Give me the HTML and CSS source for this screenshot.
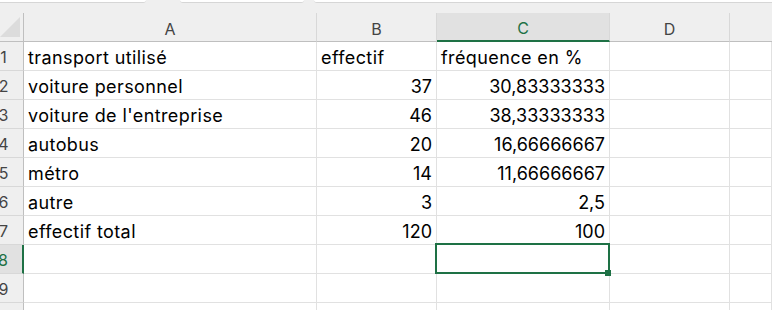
FILE: index.html
```html
<!DOCTYPE html>
<html lang="fr">
<head>
  <meta charset="UTF-8">
  <title>Feuil1</title>
  <link rel="stylesheet" href="styles.css">
</head>
<body>
  <div class="tabs">
    <div class="tab t1"></div>
    <div class="tab-gap g1"></div>
    <div class="tab t2"></div>
    <div class="tab-gap g2"></div>
    <div class="tab t3"></div>
  </div>
  <div class="spacer"></div>

  <div class="grid">
    <div class="corner"><div class="tri"></div></div>
    <div class="col-head">A</div>
    <div class="col-head">B</div>
    <div class="col-head sel">C</div>
    <div class="col-head">D</div>
    <div class="col-head last"></div>

    <div class="row-head">1</div>
    <div class="cell">transport utilisé</div>
    <div class="cell">effectif</div>
    <div class="cell">fréquence en %</div>
    <div class="cell"></div>
    <div class="cell"></div>

    <div class="row-head">2</div>
    <div class="cell">voiture personnel</div>
    <div class="cell num">37</div>
    <div class="cell num">30,83333333</div>
    <div class="cell"></div>
    <div class="cell"></div>

    <div class="row-head">3</div>
    <div class="cell">voiture de l'entreprise</div>
    <div class="cell num">46</div>
    <div class="cell num">38,33333333</div>
    <div class="cell"></div>
    <div class="cell"></div>

    <div class="row-head">4</div>
    <div class="cell">autobus</div>
    <div class="cell num">20</div>
    <div class="cell num">16,66666667</div>
    <div class="cell"></div>
    <div class="cell"></div>

    <div class="row-head">5</div>
    <div class="cell">métro</div>
    <div class="cell num">14</div>
    <div class="cell num">11,66666667</div>
    <div class="cell"></div>
    <div class="cell"></div>

    <div class="row-head">6</div>
    <div class="cell">autre</div>
    <div class="cell num">3</div>
    <div class="cell num">2,5</div>
    <div class="cell"></div>
    <div class="cell"></div>

    <div class="row-head">7</div>
    <div class="cell">effectif total</div>
    <div class="cell num">120</div>
    <div class="cell num">100</div>
    <div class="cell"></div>
    <div class="cell"></div>

    <div class="row-head sel">8</div>
    <div class="cell"></div>
    <div class="cell"></div>
    <div class="cell active"><div class="sel-box"></div><div class="handle"></div></div>
    <div class="cell"></div>
    <div class="cell"></div>

    <div class="row-head">9</div>
    <div class="cell"></div>
    <div class="cell"></div>
    <div class="cell"></div>
    <div class="cell"></div>
    <div class="cell"></div>

    <div class="row-head"></div>
    <div class="cell"></div>
    <div class="cell"></div>
    <div class="cell"></div>
    <div class="cell"></div>
    <div class="cell"></div>
  </div>
</body>
</html>
```

FILE: styles.css
```css
body {
  margin: 0;
  background: #efefef;
  font-family: Inter, "Liberation Sans", sans-serif;
  overflow: hidden;
}
.tabs {
  display: flex;
  height: 3px;
}
.tab {
  background: white;
  border-bottom: 1px solid #d6d6d6;
  border-radius: 0 0 4px 4px;
}
.t1 { width: 146px; border-radius: 0 0 4px 0; }
.g1 { width: 34px; }
.t2 { width: 124px; }
.g2 { width: 10px; }
.t3 { flex: 1; border-radius: 0 0 0 4px; }
.spacer {
  height: 10px;
}
.grid {
  display: grid;
  grid-template-columns: 24px 293px 120px 173px 120px 1fr;
  grid-auto-rows: 29px;
  background: white;
}
.grid > div {
  box-sizing: border-box;
  display: flex;
  align-items: center;
  white-space: nowrap;
}
.corner {
  background: #efefef;
  border-right: 1px solid #bfbfbf;
  border-bottom: 1px solid #bfbfbf;
  justify-content: flex-end;
  align-items: flex-end !important;
  padding: 0 3px 4px 0;
}
.tri {
  width: 20px;
  height: 20px;
  background: #dcdcdc;
  clip-path: polygon(100% 0, 100% 100%, 0 100%);
}
.col-head {
  background: #efefef;
  border-right: 1px solid #d8d8d8;
  border-bottom: 1px solid #bfbfbf;
  justify-content: center;
  color: #444;
  font-size: 16px;
  padding-top: 3px;
}
.col-head.sel {
  background: #e1e1e1;
  color: #1e7145;
  border-bottom: 2px solid #1e7145;
}
.col-head.last {
  border-right: none;
}
.row-head {
  background: #efefef;
  border-right: 1px solid #bfbfbf;
  border-bottom: 1px solid #d8d8d8;
  justify-content: center;
  padding-right: 16px;
  color: #444;
  font-size: 16px;
  padding-top: 2px;
}
.row-head.sel {
  background: #e1e1e1;
  color: #1e7145;
  border-right: 2px solid #1e7145;
}
.cell {
  border-right: 1px solid #e1e1e1;
  border-bottom: 1px solid #e1e1e1;
  padding: 2px 4px 0 4px;
  font-size: 18px;
  letter-spacing: 0.4px;
  color: black;
  overflow: hidden;
}
.num {
  justify-content: flex-end;
  letter-spacing: 0;
}
.cell.active {
  position: relative;
  overflow: visible;
}
.sel-box {
  position: absolute;
  top: -2px;
  left: -2px;
  right: -1px;
  bottom: -1px;
  border: 2px solid #1e7145;
}
.handle {
  position: absolute;
  right: -2px;
  bottom: -3px;
  width: 6px;
  height: 6px;
  background: #1e7145;
}
```
